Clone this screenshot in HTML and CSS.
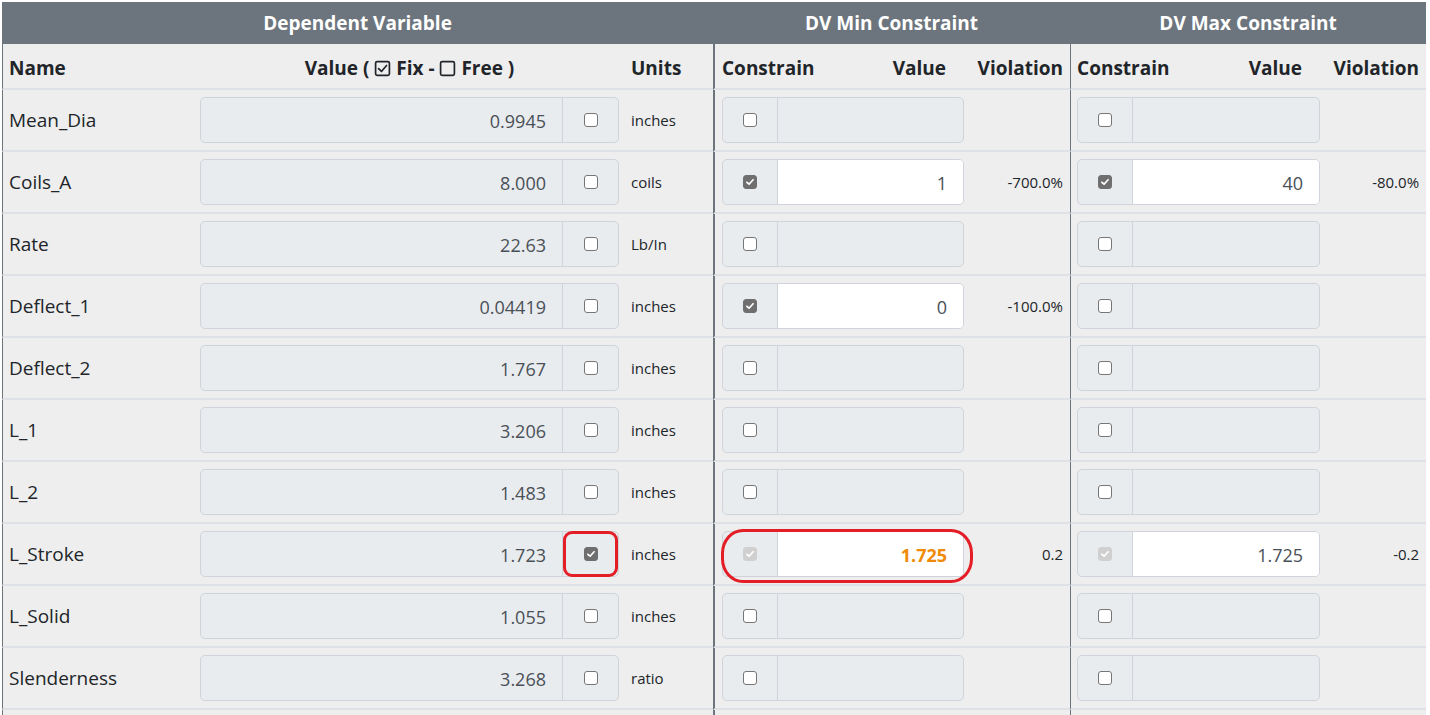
FILE: index.html
```html
<!DOCTYPE html>
<html lang="en">
<head>
<meta charset="utf-8">
<title>Dependent Variables</title>
<link rel="stylesheet" href="styles.css">
</head>
<body>
<div class="page">
<table class="dv-table">
  <colgroup>
    <col class="w-name"><col class="w-val"><col class="w-unit"><col class="w-min"><col class="w-viol"><col class="w-max"><col class="w-viol">
  </colgroup>
  <thead>
    <tr class="h1">
      <th colspan="3">Dependent Variable</th>
      <th colspan="2">DV Min Constraint</th>
      <th colspan="2">DV Max Constraint</th>
    </tr>
    <tr class="h2">
      <th class="c-name">Name</th>
      <th class="c-val center">Value ( <svg class="hicon" viewBox="0 0 16 16"><rect x="1.5" y="1.5" width="13" height="13" rx="1.5"/><path d="M4.3 8.2 L7 10.8 L11.8 5.2"/></svg> Fix - <svg class="hicon" viewBox="0 0 16 16"><rect x="1.5" y="1.5" width="13" height="13" rx="1.5"/></svg> Free )</th>
      <th class="c-unit">Units</th>
      <th class="c-min"><div class="split"><span>Constrain</span><span class="split-r">Value</span></div></th>
      <th class="c-viol">Violation</th>
      <th class="c-max"><div class="split"><span>Constrain</span><span class="split-r">Value</span></div></th>
      <th class="c-viol">Violation</th>
    </tr>
  </thead>
  <tbody>
    <tr>
      <td class="c-name">Mean_Dia</td>
      <td class="c-val"><div class="ig"><div class="ig-val">0.9945</div><div class="ig-add ig-add-r"><span class="cb"></span></div></div></td>
      <td class="c-unit">inches</td>
      <td class="c-min"><div class="ig"><div class="ig-add ig-add-l"><span class="cb"></span></div><div class="ig-val"></div></div></td>
      <td class="c-viol"></td>
      <td class="c-max"><div class="ig"><div class="ig-add ig-add-l"><span class="cb"></span></div><div class="ig-val"></div></div></td>
      <td class="c-viol"></td>
    </tr>
    <tr>
      <td class="c-name">Coils_A</td>
      <td class="c-val"><div class="ig"><div class="ig-val">8.000</div><div class="ig-add ig-add-r"><span class="cb"></span></div></div></td>
      <td class="c-unit">coils</td>
      <td class="c-min"><div class="ig"><div class="ig-add ig-add-l"><span class="cb on"><svg viewBox="0 0 14 14"><path d="M3.4 7.3 L5.9 9.6 L10.6 4.4"/></svg></span></div><div class="ig-val white">1</div></div></td>
      <td class="c-viol">-700.0%</td>
      <td class="c-max"><div class="ig"><div class="ig-add ig-add-l"><span class="cb on"><svg viewBox="0 0 14 14"><path d="M3.4 7.3 L5.9 9.6 L10.6 4.4"/></svg></span></div><div class="ig-val white">40</div></div></td>
      <td class="c-viol">-80.0%</td>
    </tr>
    <tr>
      <td class="c-name">Rate</td>
      <td class="c-val"><div class="ig"><div class="ig-val">22.63</div><div class="ig-add ig-add-r"><span class="cb"></span></div></div></td>
      <td class="c-unit">Lb/In</td>
      <td class="c-min"><div class="ig"><div class="ig-add ig-add-l"><span class="cb"></span></div><div class="ig-val"></div></div></td>
      <td class="c-viol"></td>
      <td class="c-max"><div class="ig"><div class="ig-add ig-add-l"><span class="cb"></span></div><div class="ig-val"></div></div></td>
      <td class="c-viol"></td>
    </tr>
    <tr>
      <td class="c-name">Deflect_1</td>
      <td class="c-val"><div class="ig"><div class="ig-val">0.04419</div><div class="ig-add ig-add-r"><span class="cb"></span></div></div></td>
      <td class="c-unit">inches</td>
      <td class="c-min"><div class="ig"><div class="ig-add ig-add-l"><span class="cb on"><svg viewBox="0 0 14 14"><path d="M3.4 7.3 L5.9 9.6 L10.6 4.4"/></svg></span></div><div class="ig-val white">0</div></div></td>
      <td class="c-viol">-100.0%</td>
      <td class="c-max"><div class="ig"><div class="ig-add ig-add-l"><span class="cb"></span></div><div class="ig-val"></div></div></td>
      <td class="c-viol"></td>
    </tr>
    <tr>
      <td class="c-name">Deflect_2</td>
      <td class="c-val"><div class="ig"><div class="ig-val">1.767</div><div class="ig-add ig-add-r"><span class="cb"></span></div></div></td>
      <td class="c-unit">inches</td>
      <td class="c-min"><div class="ig"><div class="ig-add ig-add-l"><span class="cb"></span></div><div class="ig-val"></div></div></td>
      <td class="c-viol"></td>
      <td class="c-max"><div class="ig"><div class="ig-add ig-add-l"><span class="cb"></span></div><div class="ig-val"></div></div></td>
      <td class="c-viol"></td>
    </tr>
    <tr>
      <td class="c-name">L_1</td>
      <td class="c-val"><div class="ig"><div class="ig-val">3.206</div><div class="ig-add ig-add-r"><span class="cb"></span></div></div></td>
      <td class="c-unit">inches</td>
      <td class="c-min"><div class="ig"><div class="ig-add ig-add-l"><span class="cb"></span></div><div class="ig-val"></div></div></td>
      <td class="c-viol"></td>
      <td class="c-max"><div class="ig"><div class="ig-add ig-add-l"><span class="cb"></span></div><div class="ig-val"></div></div></td>
      <td class="c-viol"></td>
    </tr>
    <tr>
      <td class="c-name">L_2</td>
      <td class="c-val"><div class="ig"><div class="ig-val">1.483</div><div class="ig-add ig-add-r"><span class="cb"></span></div></div></td>
      <td class="c-unit">inches</td>
      <td class="c-min"><div class="ig"><div class="ig-add ig-add-l"><span class="cb"></span></div><div class="ig-val"></div></div></td>
      <td class="c-viol"></td>
      <td class="c-max"><div class="ig"><div class="ig-add ig-add-l"><span class="cb"></span></div><div class="ig-val"></div></div></td>
      <td class="c-viol"></td>
    </tr>
    <tr>
      <td class="c-name">L_Stroke</td>
      <td class="c-val"><div class="ig"><div class="ig-val">1.723</div><div class="ig-add ig-add-r"><span class="cb on"><svg viewBox="0 0 14 14"><path d="M3.4 7.3 L5.9 9.6 L10.6 4.4"/></svg></span></div></div></td>
      <td class="c-unit">inches</td>
      <td class="c-min"><div class="ig"><div class="ig-add ig-add-l"><span class="cb dis"><svg viewBox="0 0 14 14"><path d="M3.4 7.3 L5.9 9.6 L10.6 4.4"/></svg></span></div><div class="ig-val white warn">1.725</div></div></td>
      <td class="c-viol">0.2</td>
      <td class="c-max"><div class="ig"><div class="ig-add ig-add-l"><span class="cb dis"><svg viewBox="0 0 14 14"><path d="M3.4 7.3 L5.9 9.6 L10.6 4.4"/></svg></span></div><div class="ig-val white">1.725</div></div></td>
      <td class="c-viol">-0.2</td>
    </tr>
    <tr>
      <td class="c-name">L_Solid</td>
      <td class="c-val"><div class="ig"><div class="ig-val">1.055</div><div class="ig-add ig-add-r"><span class="cb"></span></div></div></td>
      <td class="c-unit">inches</td>
      <td class="c-min"><div class="ig"><div class="ig-add ig-add-l"><span class="cb"></span></div><div class="ig-val"></div></div></td>
      <td class="c-viol"></td>
      <td class="c-max"><div class="ig"><div class="ig-add ig-add-l"><span class="cb"></span></div><div class="ig-val"></div></div></td>
      <td class="c-viol"></td>
    </tr>
    <tr>
      <td class="c-name">Slenderness</td>
      <td class="c-val"><div class="ig"><div class="ig-val">3.268</div><div class="ig-add ig-add-r"><span class="cb"></span></div></div></td>
      <td class="c-unit">ratio</td>
      <td class="c-min"><div class="ig"><div class="ig-add ig-add-l"><span class="cb"></span></div><div class="ig-val"></div></div></td>
      <td class="c-viol"></td>
      <td class="c-max"><div class="ig"><div class="ig-add ig-add-l"><span class="cb"></span></div><div class="ig-val"></div></div></td>
      <td class="c-viol"></td>
    </tr>
    <tr class="tail">
      <td class="c-name"></td>
      <td class="c-val"></td>
      <td class="c-unit"></td>
      <td class="c-min"></td>
      <td class="c-viol"></td>
      <td class="c-max"></td>
      <td class="c-viol"></td>
    </tr>
  </tbody>
</table>
<div class="mark mark-fix"></div>
<div class="mark mark-min"></div>
</div>
</body>
</html>
```

FILE: styles.css
```css
* { box-sizing: border-box; }
html, body { margin: 0; padding: 0; background: #ffffff; }
body {
  font-family: "Open Sans", "Noto Sans", "DejaVu Sans", sans-serif;
  color: #212529;
}
.page {
  position: relative;
  width: 1430px;
  height: 715px;
  overflow: hidden;
  padding: 2px 0 0 2px;
}
.dv-table {
  border-collapse: separate;
  border-spacing: 0;
  table-layout: fixed;
  width: 1424px;
  background: #eeeeee;
}
.w-name { width: 192px; }
.w-val { width: 431px; }
.w-unit { width: 88px; }
.w-min { width: 257px; }
.w-viol { width: 100px; }
.w-max { width: 256px; }

.h1 th {
  background: #6c757d;
  color: #ffffff;
  font-size: 19px;
  font-weight: 700;
  height: 42px;
  padding: 0;
  text-align: center;
  vertical-align: middle;
}
.h2 th {
  height: 46px;
  font-size: 19px;
  font-weight: 700;
  text-align: left;
  vertical-align: middle;
  padding: 3px 6px 0 6px;
  border-bottom: 2px solid #dee2e6;
  white-space: nowrap;
}
.h2 th.center { text-align: center; }
.hicon {
  width: 17px;
  height: 17px;
  vertical-align: -2px;
  fill: none;
  stroke: #212529;
  stroke-width: 1.6;
  stroke-linecap: round;
  stroke-linejoin: round;
}
.split { display: flex; justify-content: space-between; padding-right: 18px; }

td {
  height: 62px;
  padding: 7px 6px;
  border-bottom: 2px solid #dee2e6;
  vertical-align: middle;
}
.c-name { border-left: 1px solid #6c757d; font-size: 19px; white-space: nowrap; }
.h2 th.c-name, td.c-name { padding-left: 6px; }
.c-unit { font-size: 15px; }
.c-min { border-left: 2px solid #6c757d; padding-left: 7px; }
.h2 th.c-min { padding-left: 7px; }
.c-max { border-left: 1px solid #6c757d; }
.c-viol { text-align: right; padding-right: 7px; font-size: 15px; }
.h2 th.c-viol { text-align: right; padding-right: 7px; font-size: 19px; }

.ig {
  display: flex;
  height: 46px;
  border: 1px solid #ced4da;
  border-radius: 5px;
  background: #e9ecef;
  overflow: hidden;
}
.ig-val {
  flex: 1;
  display: flex;
  align-items: center;
  justify-content: flex-end;
  padding: 2px 16px 0 0;
  font-size: 18px;
  color: #495057;
}
.ig-val.white { background: #ffffff; }
.ig-val.warn { color: #f08a0a; font-weight: 700; }
.ig-add {
  display: flex;
  align-items: center;
  justify-content: center;
}
.ig-add-r { width: 56px; border-left: 1px solid #ced4da; }
.ig-add-l { width: 55px; border-right: 1px solid #ced4da; }

.cb {
  display: inline-flex;
  width: 14px;
  height: 14px;
  border: 1px solid #767676;
  border-radius: 3px;
  background: #ffffff;
}
.cb svg {
  width: 12px;
  height: 12px;
  fill: none;
  stroke: #ffffff;
  stroke-width: 2;
  stroke-linecap: round;
  stroke-linejoin: round;
}
.cb.on { background: #6f6f6f; border-color: #6f6f6f; }
.cb.dis { background: #d0d0d0; border-color: #d0d0d0; }

.mark {
  position: absolute;
  border: 3px solid #e41e26;
}
.mark-fix { left: 563px; top: 531px; width: 55px; height: 46px; border-radius: 9px; }
.mark-min { left: 721px; top: 529px; width: 252px; height: 54px; border-radius: 22px / 24px; }
```
